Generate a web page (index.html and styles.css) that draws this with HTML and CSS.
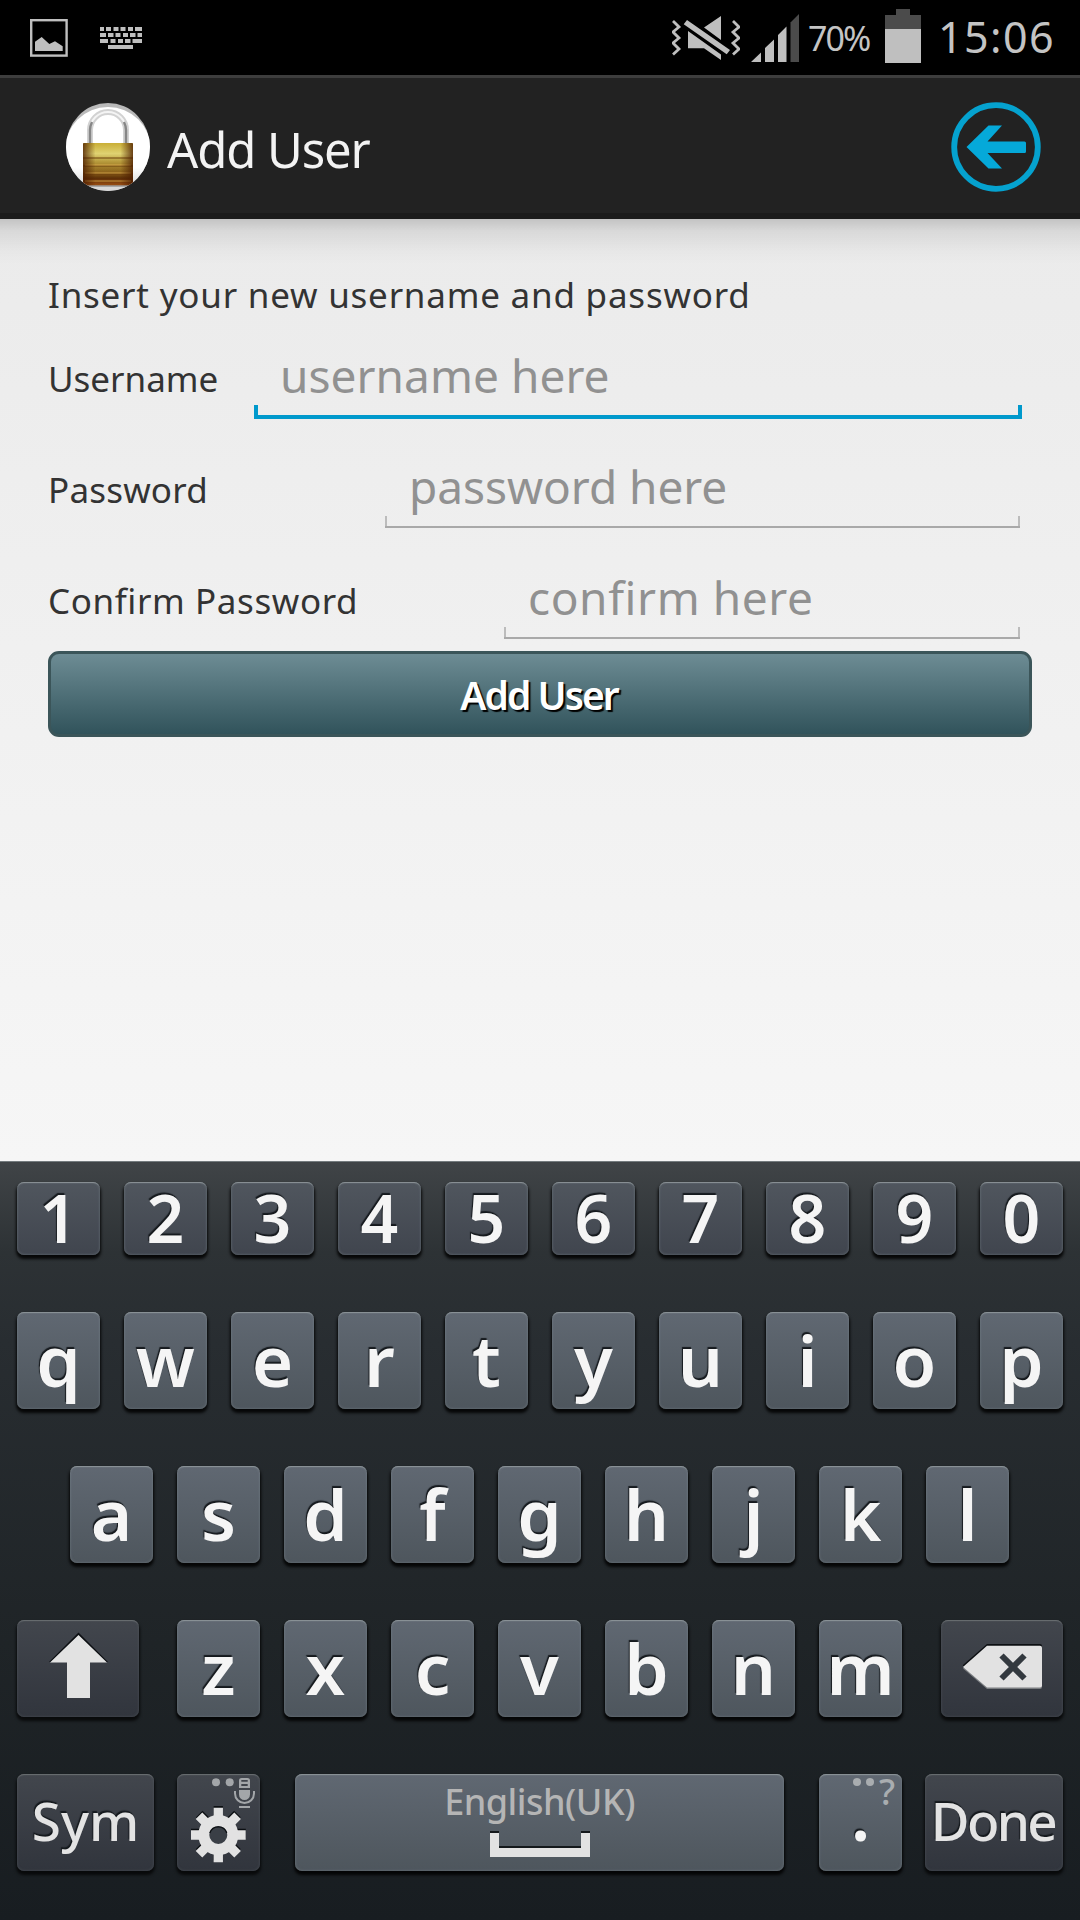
FILE: index.html
```html
<!DOCTYPE html>
<html lang="en">
<head>
<meta charset="utf-8">
<title>Add User</title>
<link rel="stylesheet" href="styles.css">
</head>
<body>
<div class="screen">
  <div class="status">
    <svg class="st-image" width="38" height="38" viewBox="0 0 38 38"><rect x="1.2" y="1.2" width="35.4" height="35.4" fill="none" stroke="#bfbfbf" stroke-width="2.4"/><path d="M5 22.8L11.700 18l7.600 7 5.700-2.700 7.700 5V32H5z" fill="#bfbfbf"/></svg>
    <svg class="st-keyboard" width="42" height="22" viewBox="0 0 42 22" fill="none" stroke="#bfbfbf" stroke-width="4"><path d="M0 2h4m2 0h5m2.500 0h5m2 0h5m2.500 0h5m2 0h7M0 8h6m2 0h5.500m2 0h5m2.500 0h5m2 0h5.500m2 0h4.500M0 14h8m2.500 0h5m2.500 0h5m2 0h5.500m2 0h9.500M8 20h25"/></svg>
    <span class="grow"></span>
    <svg class="st-mute" width="68" height="46" viewBox="0 0 68 46"><g fill="none" stroke="#bfbfbf" stroke-width="2.800"><path d="M1 6l6 6-6 5 6 6-6 5 6 6-6 5.500M61 6l6 6-6 5 6 6-6 5 6 6-6 5.500"/></g><path fill="#bfbfbf" d="M49 1v24L32 12.500zM16 16l33 23.500V45L32 33.300H16zM15 5l43 30-3.300 4.300L11.700 9.300z"/></svg>
    <svg class="st-signal" width="48" height="48" viewBox="0 0 48 48"><path fill="#bfbfbf" d="M0 48l10-9.500V48zM14 48V34l9-8.500V48zM27 48V21l8.500-8.500V48z"/><path fill="#4b4b4b" d="M39.500 48V8.500L48 0v48z"/></svg>
    <span class="st-percent">70%</span>
    <svg class="st-battery" width="36" height="54" viewBox="0 0 36 54"><path fill="#4b4b4b" d="M11 0h14v6h11v14H0V6h11z"/><path fill="#bfbfbf" d="M0 20h36v34H0z"/></svg>
    <span class="st-clock">15:06</span>
  </div>

  <header class="bar">
    <svg class="lock" width="84" height="90" viewBox="0 0 84 90">
      <defs>
        <linearGradient id="disc" x1="0" y1="0" x2="0" y2="1"><stop offset="0" stop-color="#fff"/><stop offset=".7" stop-color="#fff"/><stop offset=".93" stop-color="#d8d8d8"/></linearGradient>
        <linearGradient id="brass" x1="0" y1="0" x2="0" y2="1"><stop offset="0" stop-color="#c9ae36"/><stop offset=".25" stop-color="#dfd272"/><stop offset=".45" stop-color="#b4973a"/><stop offset=".7" stop-color="#8a611b"/><stop offset=".83" stop-color="#5c2f08"/><stop offset="1" stop-color="#9b4f14"/></linearGradient>
        <linearGradient id="edge"><stop offset="0" stop-color="#4c1d00" stop-opacity=".8"/><stop offset=".25" stop-color="#4c1d00" stop-opacity="0"/><stop offset=".75" stop-color="#4c1d00" stop-opacity="0"/><stop offset="1" stop-color="#4c1d00" stop-opacity=".8"/></linearGradient>
        <clipPath id="round"><ellipse cx="42" cy="45" rx="42" ry="44"/></clipPath>
      </defs>
      <g clip-path="url(#round)">
        <rect width="84" height="90" fill="#b9b9b9"/>
        <ellipse cx="42" cy="48" rx="43" ry="43" fill="url(#disc)"/>
        <path d="M24 42V28a18 18 0 0 1 36 0v15" fill="none" stroke="#d2d2d2" stroke-width="6"/>
        <path d="M24 42V28a18 18 0 0 1 36 0v15" fill="none" stroke="#f4f4f4" stroke-width="2"/>
        <path d="M24 42V28q0-4 2-8M60 42V28q0-4-2-8" fill="none" stroke="#868686" stroke-width="2.400"/>
        <rect x="17" y="41" width="50" height="42.500" rx="1" fill="url(#brass)"/>
        <path d="M17 56h50M17 64h50M17 72h50" stroke="#6a3e0b" stroke-width="1.500" opacity=".65"/>
        <path d="M19 63h46M19 71h46M19 79h46" stroke="#e0b252" stroke-width="1" opacity=".8"/>
        <rect x="17" y="41" width="50" height="42.500" rx="1" fill="url(#edge)"/>
        <path d="M14 84h56" stroke="#777" stroke-width="1"/>
      </g>
    </svg>
    <h1 class="title">Add User</h1>
    <svg class="back" width="90" height="90" viewBox="0 0 90 90"><circle cx="45" cy="45" r="41.800" fill="none" stroke="#05a2cf" stroke-width="5.800"/><path fill="#05a9d9" d="M15.500 45L37.500 23.500H51L36.500 39.500H73.500q1.500 0 1.500 1.500v8.500q0 1.500-1.500 1.500H36.500L51 66.500H37.500z"/></svg>
  </header>

  <main class="form">
    <p class="hint">Insert your new username and password</p>
    <div class="row">
      <label class="label l-user" for="user">Username</label>
      <input class="field f-user" id="user" placeholder="username here">
    </div>
    <div class="row">
      <label class="label l-pass" for="pass">Password</label>
      <input class="field f-pass" id="pass" placeholder="password here">
    </div>
    <div class="row">
      <label class="label l-conf" for="conf">Confirm Password</label>
      <input class="field f-conf" id="conf" placeholder="confirm here">
    </div>
    <button class="submit">Add User</button>
  </main>

  <section class="keyboard">
    <div class="keys digits"><b class="key">1</b><b class="key">2</b><b class="key">3</b><b class="key">4</b><b class="key">5</b><b class="key">6</b><b class="key">7</b><b class="key">8</b><b class="key">9</b><b class="key">0</b></div>
    <div class="keys"><b class="key">q</b><b class="key">w</b><b class="key">e</b><b class="key">r</b><b class="key">t</b><b class="key">y</b><b class="key">u</b><b class="key">i</b><b class="key">o</b><b class="key">p</b></div>
    <div class="keys middle"><b class="key">a</b><b class="key">s</b><b class="key">d</b><b class="key">f</b><b class="key">g</b><b class="key">h</b><b class="key">j</b><b class="key">k</b><b class="key">l</b></div>
    <div class="keys spread">
      <b class="key dark side"><svg width="122" height="97" viewBox="0 0 122 97"><path fill="#0c0f12" d="M61.500 12.500L91 42H32z"/><path fill="#e2e2e2" d="M61.500 15L90 42.500H73V78H50V42.500H33z"/></svg></b>
      <div class="keys inner"><b class="key">z</b><b class="key">x</b><b class="key">c</b><b class="key">v</b><b class="key">b</b><b class="key">n</b><b class="key">m</b></div>
      <b class="key dark side"><svg width="122" height="97" viewBox="0 0 122 97"><path fill="#7a7d80" d="M22 48.500L46 69h53q2 0 2-2V30H46z"/><path fill="#0c0f12" d="M22 45L46 24h53q2 0 2 2v20H22z"/><path fill="#e2e2e2" d="M22 47L46 25.700h53q2 0 2 2V65.500q0 2-2 2H46z"/><path d="M60.500 35.500l23 23m0-23l-23 23" stroke="#33393f" stroke-width="6"/></svg></b>
    </div>
    <div class="keys bottom">
      <b class="key dark word sym">Sym</b>
      <b class="key dark gear"><svg width="83" height="97" viewBox="0 0 83 97">
        <g fill="#a3a6a9"><circle cx="39" cy="8.300" r="4"/><circle cx="52.700" cy="8.300" r="4"/><path fill-rule="evenodd" d="M62 14V6.500Q62 4 64.500 4h6Q73 4 73 6.500V14zM64.300 6v1.700h6.400V6zM64.300 10v2h6.400v-2z"/><path d="M62 16h11v4.500a5.500 5.500 0 0 1-11 0zM62 32h11v2H62z"/></g>
        <path d="M58 17v2.500a9.500 9.500 0 0 0 19 0V17" fill="none" stroke="#a3a6a9" stroke-width="2"/>
        <g stroke="#0c0f12" stroke-width="9.300"><path d="M41.300 32v54M14 59.500h54.800M22.200 40l38.200 38.200M60.400 40L22.200 78.200"/></g>
        <g stroke="#e2e2e2" stroke-width="9.300"><path d="M41.300 33.800V51M41.300 71v17.300M14 61h17M51.500 61h17.200M22 41.700l12 12M48.600 68.300l12 12M60.600 41.700l-12 12M34 68.300l-12 12"/></g>
        <circle cx="41.300" cy="61" r="14.500" fill="#3a3f46" stroke="#e2e2e2" stroke-width="11"/><path d="M32.800 59a9 9 0 0 1 17 0" fill="none" stroke="#0c0f12" stroke-width="1.200"/>
      </svg></b>
      <b class="key space"><span class="lang">English(UK)</span><svg width="100" height="26" viewBox="0 0 100 26"><path fill="#14181b" d="M0 0h9v15h82V0h9v20H0z"/><path fill="#e2e2e2" d="M0 2h9v15h82V2h9v24H0z"/></svg></b>
      <b class="key period">.<span class="alt"><i class="dot"></i><i class="dot"></i>?</span></b>
      <b class="key dark word done">Done</b>
    </div>
  </section>
</div>
</body>
</html>
```
FILE: styles.css
```css
* { box-sizing: border-box; margin: 0; padding: 0; }
body { width: 1080px; height: 1920px; overflow: hidden; font-family: "Noto Sans", "Open Sans", sans-serif; }
svg { display: block; flex: none; }
.screen { display: flex; flex-direction: column; width: 1080px; height: 1920px; background: #f0f0f0; }

/* Status bar */
.status { display: flex; align-items: center; height: 75px; padding-left: 30px; padding-right: 22px; background: #000; color: #c4c4c4; white-space: nowrap; }
.st-keyboard { margin-left: 32px; }
.grow { flex: 1; }
.st-mute { margin-right: 11px; }
.st-percent { width: 77px; margin-left: 9px; padding-top: 1px; font-size: 34px; line-height: 48px; letter-spacing: -1.9px; }
.st-battery { margin-bottom: 3px; }
.st-clock { width: 120px; margin-left: 17px; margin-bottom: 1px; font-size: 43px; line-height: 60px; letter-spacing: 1.4px; }

/* Title bar */
.bar { display: flex; align-items: center; height: 144px; padding: 3px 39px 0 66px; border-top: 3px solid #3d3d3d; border-bottom: 6px solid #1b1b1b; background: #222; }
.title { flex: 1; margin-left: 17px; padding-top: 4px; color: #f3f3f3; font-size: 49px; font-weight: 400; line-height: 68px; letter-spacing: -1.1px; }

/* Form */
.form { display: flex; flex-direction: column; height: 942px; padding: 51px 48px 0; background: linear-gradient(rgba(0,0,0,.17), rgba(0,0,0,.08) 12px, rgba(0,0,0,.02) 32px, transparent 46px), linear-gradient(#ebebeb, #f6f6f6); color: #333; }
.hint { height: 71px; padding-top: 1px; font-size: 35px; line-height: 48px; letter-spacing: .78px; }
.row { display: flex; justify-content: space-between; height: 78px; margin-bottom: 33px; padding-right: 10px; }
.row:nth-of-type(3) { margin-bottom: 10px; }
.label { padding-top: 14px; font-size: 35px; line-height: 48px; white-space: nowrap; }
.l-user { letter-spacing: 0; }
.l-pass { letter-spacing: .2px; }
.l-conf { letter-spacing: .6px; }
.field { --c: #a9a9a9; --w: 2px; --h: 12px; height: 76px; padding: 0 0 9px 24px; border: 0; outline: 0; color: #333; font: 400 46px/64px "Noto Sans", "Open Sans", sans-serif; background: linear-gradient(var(--c), var(--c)) left bottom / 100% var(--w) no-repeat, linear-gradient(#bcbcbc, #bcbcbc) left bottom / var(--w) var(--h) no-repeat, linear-gradient(#bcbcbc, #bcbcbc) right bottom / var(--w) var(--h) no-repeat; }
.field::placeholder { color: #919191; opacity: 1; }
.f-user { width: 768px; height: 78px; padding: 0 0 11px 26px; letter-spacing: .05px; background: linear-gradient(#0099cc, #0099cc) left bottom / 100% 4px no-repeat, linear-gradient(#0099cc, #0099cc) left bottom / 4px 14px no-repeat, linear-gradient(#0099cc, #0099cc) right bottom / 4px 14px no-repeat; }
.f-pass { width: 635px; margin-right: 2px; letter-spacing: -.05px; }
.f-conf { width: 516px; margin-right: 2px; letter-spacing: .6px; }
.submit { width: 984px; height: 86px; padding: 1px 2px 0 0; border: 3px solid #3b5559; border-radius: 11px; background: linear-gradient(#6d8c94, #31535b); color: #fff; font: 600 39px/60px "Noto Sans", sans-serif; letter-spacing: -2px; text-shadow: 2px 2px 1px #000; }

/* Keyboard */
.keyboard { display: flex; flex-direction: column; gap: 57px; height: 759px; padding: 20px 17px 0; border-top: 1px solid #747b7e; background: linear-gradient(#404447, #2d3235 90px, #282d31 180px, #1f2427 480px, #181d21); }
.keys { display: flex; gap: 24px; }
.key { position: relative; display: flex; justify-content: center; width: 83px; height: 97px; border-radius: 7px; background: linear-gradient(#606872, #4e565d); box-shadow: inset 0 2px 1px -1px #8c9498, inset 0 0 3px rgba(140,152,158,.5), 0 3px 3px 1px rgba(0,0,0,.85); color: #f5f5f5; font-size: 71px; font-weight: 600; line-height: 95px; text-shadow: -1px -2px 1px #15191d; }
.digits .key { height: 73px; background: linear-gradient(#50565e, #40454e); font-size: 66px; line-height: 71px; }
.middle { padding-left: 53px; }
.spread { gap: 38px; }
.key.dark { background: linear-gradient(#42464d, #31353d); color: #e3e3e3; box-shadow: inset 0 2px 1px -1px #6a6f72, inset 0 0 3px rgba(110,118,122,.4), 0 3px 3px 1px rgba(0,0,0,.7); }
.key.side { width: 122px; }
.spread .side:last-child { margin-left: 1px; }
.bottom { gap: 0; justify-content: space-between; }
.key.word { font-size: 53px; line-height: 94px; }
.key.sym { width: 137px; }
.key.done { width: 138px; padding-right: 2px; font-weight: 500; letter-spacing: -2.6px; line-height: 93px; }
.key.sym { font-weight: 500; }
.key.gear { margin-right: 12px; }
.key.space { flex-direction: column; align-items: center; justify-content: flex-start; width: 489px; }
.lang { height: 57px; padding-top: 3px; color: #b5b5b5; font-size: 36px; font-weight: 500; line-height: 50px; letter-spacing: -.5px; text-shadow: none; }
.key.period { margin-left: 12px; line-height: 79px; }
.alt { position: absolute; top: 3px; right: 7px; display: flex; gap: 5px; color: #a9adb0; font-size: 36px; font-weight: 500; line-height: 30px; text-shadow: none; }
.dot { width: 8px; height: 8px; margin-top: 1px; border-radius: 50%; background: #a9adb0; }
```
